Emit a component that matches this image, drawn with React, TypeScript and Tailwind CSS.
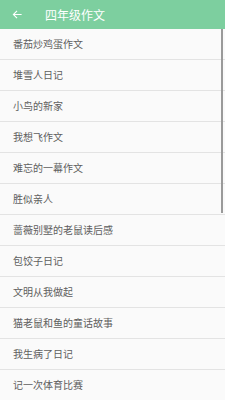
const ITEMS = [
  "番茄炒鸡蛋作文",
  "堆雪人日记",
  "小鸟的新家",
  "我想飞作文",
  "难忘的一幕作文",
  "胜似亲人",
  "蔷薇别墅的老鼠读后感",
  "包饺子日记",
  "文明从我做起",
  "猫老鼠和鱼的童话故事",
  "我生病了日记",
  "记一次体育比赛",
];

export default function App() {
  return (
    <div
      className="relative w-[225px] h-[400px] overflow-hidden bg-[#fafafa]"
      style={{ fontFamily: '"Noto Sans CJK SC", "Noto Sans", sans-serif' }}
    >
      {/* Toolbar */}
      <div className="h-[29px] bg-[#7dcf9f] flex items-center">
        <svg className="ml-[12px] w-[11px] h-[11px] text-white" viewBox="0 0 24 24" fill="none" stroke="currentColor" strokeWidth={2.4}>
          <path d="M21 12H4M11 4l-8 8 8 8" />
        </svg>
        <span className="ml-[22px] text-white text-[12px] leading-none">四年级作文</span>
      </div>

      {/* List */}
      <div className="flex flex-col">
        {ITEMS.map((t, i) => (
          <div key={i} className="h-[31px] flex items-center pl-[13px] border-b border-[#e3e3e3]">
            <span className="text-[10px] text-[#5e5e5e] leading-none">{t}</span>
          </div>
        ))}
      </div>

      {/* Scrollbar */}
      <div className="absolute right-[2px] top-[29px] w-[2px] h-[184px] bg-[#9a9a9a]" />
    </div>
  );
}
